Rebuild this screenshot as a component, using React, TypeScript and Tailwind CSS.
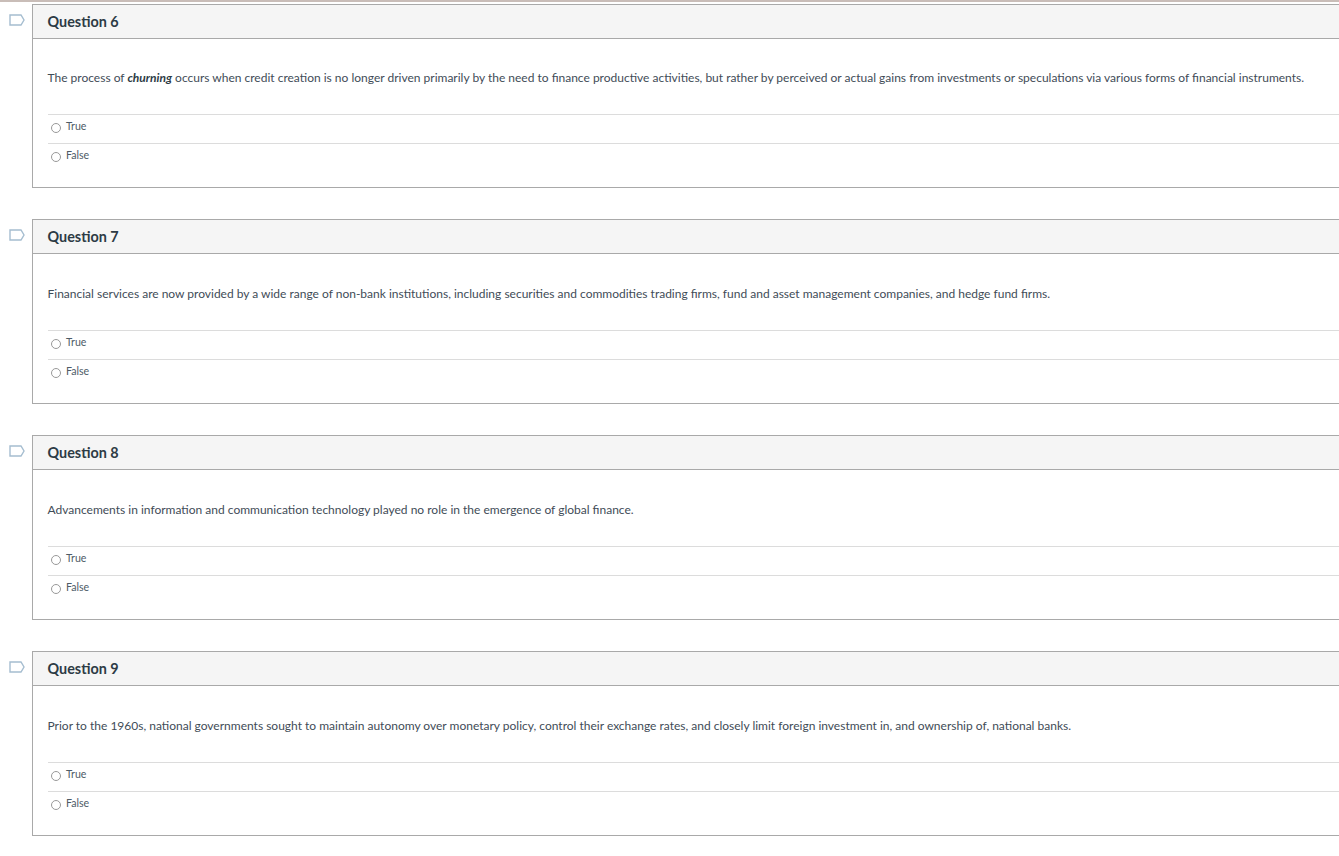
const questions = [
  {
    id: 6,
    text: (
      <>
        The process of <b className="font-bold italic text-[#2d3b45]">churning</b> occurs when credit creation is no longer driven primarily by the need to finance productive activities, but rather by perceived or actual gains from investments or speculations via various forms of financial instruments.
      </>
    ),
  },
  {
    id: 7,
    text: "Financial services are now provided by a wide range of non-bank institutions, including securities and commodities trading firms, fund and asset management companies, and hedge fund firms.",
  },
  {
    id: 8,
    text: "Advancements in information and communication technology played no role in the emergence of global finance.",
  },
  {
    id: 9,
    text: "Prior to the 1960s, national governments sought to maintain autonomy over monetary policy, control their exchange rates, and closely limit foreign investment in, and ownership of, national banks.",
  },
];

function FlagIcon() {
  return (
    <svg width="16" height="12" viewBox="0 0 16 12" fill="none" className="block">
      <path d="M1 1H12L15 6L12 11H1V1Z" stroke="#a5bdd0" strokeWidth="1.4" />
    </svg>
  );
}

function Answer({ label }: { label: string }) {
  return (
    <div className="flex h-[29px] items-center border-t border-[#dcdcdc] pl-[3px] text-[10.6px] text-[#4d5b66]">
      <span className="-mt-[2px] h-[10px] w-[10px] rounded-full border border-[#999]" />
      <span className="-mt-[4px] ml-[5.5px]">{label}</span>
    </div>
  );
}

export default function App() {
  return (
    <div className="h-[856px] w-[1339px] overflow-hidden bg-white font-['Lato',sans-serif] text-[#2d3b45]">
      <div className="h-[2px] bg-[#c9bdb8]" />
      <div className="flex flex-col gap-[31px] pt-[2px]">
        {questions.map((q, i) => (
          <div key={q.id} className="flex">
            <div className="w-[32px] shrink-0 pl-[9px] pt-[10px]">
              <FlagIcon />
            </div>
            <div className={i === 0 ? "h-[184px] flex-1 border-y border-l border-[#a9a9a9]" : "h-[185px] flex-1 border-y border-l border-[#a9a9a9]"}>
              <div className="flex h-[34px] items-center border-b border-[#a9a9a9] bg-[#f5f5f5] pl-[14.5px] text-[14.4px] font-bold">
                Question {q.id}
              </div>
              <div className="pl-[14.5px]">
                <p className={i === 0 ? "flex h-[75px] items-end whitespace-nowrap pb-[27px] text-[12px] text-[#3f4c57]" : "flex h-[76px] items-end whitespace-nowrap pb-[27px] text-[12px] text-[#3f4c57]"}>
                  <span>{q.text}</span>
                </p>
                <Answer label="True" />
                <Answer label="False" />
              </div>
            </div>
          </div>
        ))}
      </div>
    </div>
  );
}
